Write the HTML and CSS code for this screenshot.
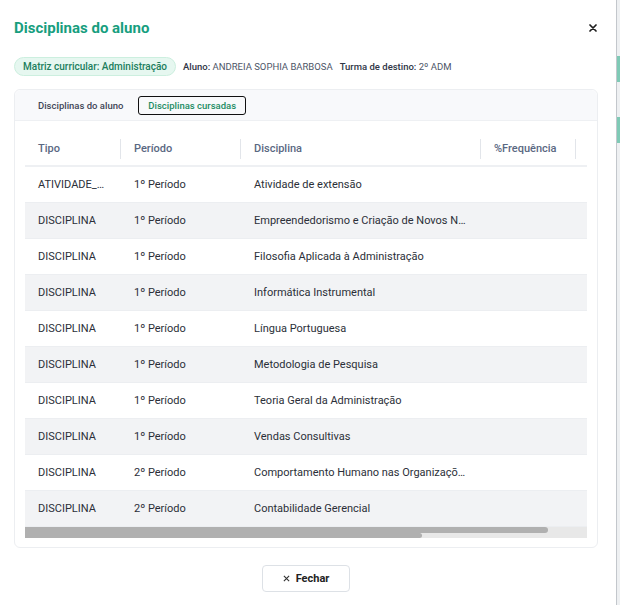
FILE: index.html
```html
<!DOCTYPE html>
<html lang="pt-BR">
<head>
  <meta charset="UTF-8">
  <meta name="viewport" content="width=device-width, initial-scale=1.0">
  <title>Disciplinas do aluno</title>
  <link rel="stylesheet" href="styles.css">
</head>
<body>
  <div class="modal">
    <div class="modal-header">
      <h2>Disciplinas do aluno</h2>
      <button class="close" aria-label="Fechar">
        <svg width="8" height="8" viewBox="0 0 8 8"><path d="M1 1L7 7M7 1L1 7" stroke="#1e1e1e" stroke-width="1.7" stroke-linecap="round"/></svg>
      </button>
    </div>

    <div class="info">
      <span class="chip">Matriz curricular: Administração</span>
      <span><b>Aluno:</b> ANDREIA SOPHIA BARBOSA</span>
      <span><b>Turma de destino:</b> 2º ADM</span>
    </div>

    <div class="card">
      <div class="tabs">
        <button class="tab">Disciplinas do aluno</button>
        <button class="tab active">Disciplinas cursadas</button>
      </div>

      <div class="table-wrap">
        <table>
          <colgroup>
            <col style="width:96px">
            <col style="width:120px">
            <col style="width:240px">
            <col style="width:95px">
            <col style="width:110px">
          </colgroup>
          <thead>
            <tr>
              <th>Tipo</th>
              <th>Período</th>
              <th>Disciplina</th>
              <th>%Frequência</th>
              <th>Situação</th>
            </tr>
          </thead>
          <tbody>
            <tr><td>ATIVIDADE_EXTENSAO</td><td>1º Período</td><td>Atividade de extensão</td><td></td><td></td></tr>
            <tr><td>DISCIPLINA</td><td>1º Período</td><td>Empreendedorismo e Criação de Novos Negócios</td><td></td><td></td></tr>
            <tr><td>DISCIPLINA</td><td>1º Período</td><td>Filosofia Aplicada à Administração</td><td></td><td></td></tr>
            <tr><td>DISCIPLINA</td><td>1º Período</td><td>Informática Instrumental</td><td></td><td></td></tr>
            <tr><td>DISCIPLINA</td><td>1º Período</td><td>Língua Portuguesa</td><td></td><td></td></tr>
            <tr><td>DISCIPLINA</td><td>1º Período</td><td>Metodologia de Pesquisa</td><td></td><td></td></tr>
            <tr><td>DISCIPLINA</td><td>1º Período</td><td>Teoria Geral da Administração</td><td></td><td></td></tr>
            <tr><td>DISCIPLINA</td><td>1º Período</td><td>Vendas Consultivas</td><td></td><td></td></tr>
            <tr><td>DISCIPLINA</td><td>2º Período</td><td>Comportamento Humano nas Organizações</td><td></td><td></td></tr>
            <tr><td>DISCIPLINA</td><td>2º Período</td><td>Contabilidade Gerencial</td><td></td><td></td></tr>
          </tbody>
        </table>
      </div>
      <div class="scrollbar">
        <div class="thumb"></div>
        <div class="thumb thumb-low"></div>
      </div>
    </div>

    <div class="footer">
      <button class="btn">
        <svg width="7" height="7" viewBox="0 0 8 8"><path d="M1 1L7 7M7 1L1 7" stroke="#333" stroke-width="1.3"/></svg>
        Fechar
      </button>
    </div>
  </div>

  <div class="page-edge">
    <span class="mark"></span>
    <span class="mark"></span>
  </div>
</body>
</html>
```

FILE: styles.css
```css
* {
  margin: 0;
  padding: 0;
  box-sizing: border-box;
  font-family: Roboto, "Noto Sans", sans-serif;
}

body {
  display: flex;
  height: 605px;
  overflow: hidden;
  background: #eef0f2;
}

.modal {
  width: 617px;
  height: 605px;
  background: #fff;
  border-right: 1px solid #c3c7cc;
  padding: 17px 18px 0 14px;
}

.page-edge {
  flex: 1;
  display: flex;
  flex-direction: column;
  gap: 35px;
  padding-top: 56px;
}

.mark {
  display: block;
  height: 26px;
  background: #7fcab6;
}

.modal-header {
  display: flex;
  justify-content: space-between;
  align-items: center;
  height: 22px;
}

h2 {
  font-size: 15px;
  font-weight: 700;
  color: #179e7e;
}

.close {
  border: none;
  background: none;
  width: 12px;
  height: 12px;
  margin-right: -1px;
  display: flex;
  align-items: center;
  justify-content: center;
}

.info {
  display: flex;
  align-items: center;
  gap: 7px;
  margin-top: 18px;
  font-size: 9.5px;
  color: #4d5567;
}

.info b {
  font-weight: 500;
  color: #2f3646;
}

.chip {
  height: 19px;
  padding: 0 8px;
  display: flex;
  align-items: center;
  background: #e6f7f0;
  border: 1px solid #ccefdf;
  border-radius: 10px;
  color: #217e5d;
  font-weight: 500;
  font-size: 10px;
}

.card {
  margin-top: 13px;
  border: 1px solid #eceef1;
  border-radius: 6px;
  padding: 0 10px 9px;
}

.tabs {
  display: flex;
  align-items: center;
  gap: 6px;
  height: 31px;
  margin: 0 -10px;
  padding: 0 14px;
  background: #f8f9fb;
  border-bottom: 1px solid #eef0f3;
  border-radius: 6px 6px 0 0;
}

.tab {
  border: 1.5px solid transparent;
  background: none;
  height: 19px;
  padding: 0 8px;
  font-size: 9.5px;
  font-weight: 500;
  color: #3f4656;
  border-radius: 3px;
}

.tab.active {
  border-color: #111;
  color: #1c8c63;
  padding: 0 9px;
}

.table-wrap {
  margin-top: 11px;
  overflow: hidden;
}

table {
  table-layout: fixed;
  border-collapse: collapse;
  width: 661px;
  font-size: 11px;
}

th {
  height: 34px;
  text-align: left;
  font-weight: 500;
  color: #5a6882;
  padding: 0 12px 0 13px;
  border-bottom: 2px solid #eef0f3;
  background: linear-gradient(#e2e5ea, #e2e5ea) right center / 1px 20px no-repeat;
}

td {
  height: 36px;
  padding: 0 12px 0 13px;
  color: #2b2f38;
  border-bottom: 1px solid #eceef1;
  white-space: nowrap;
  overflow: hidden;
  text-overflow: ellipsis;
}

tbody tr:nth-child(even) td {
  background: #f2f3f5;
}

.scrollbar {
  height: 11px;
  background: #e8e8e8;
  display: flex;
  flex-direction: column;
}

.thumb {
  width: 523px;
  height: 6px;
  background: #b0b0b0;
  border-radius: 0 3px 3px 0;
}

.thumb-low {
  width: 397px;
  height: 5px;
}

.footer {
  display: flex;
  justify-content: center;
  margin-top: 17px;
}

.btn {
  width: 88px;
  height: 27px;
  display: flex;
  align-items: center;
  justify-content: center;
  gap: 6px;
  background: #fff;
  border: 1px solid #dde1e6;
  border-radius: 4px;
  font-size: 11px;
  font-weight: 700;
  color: #222;
}
```
